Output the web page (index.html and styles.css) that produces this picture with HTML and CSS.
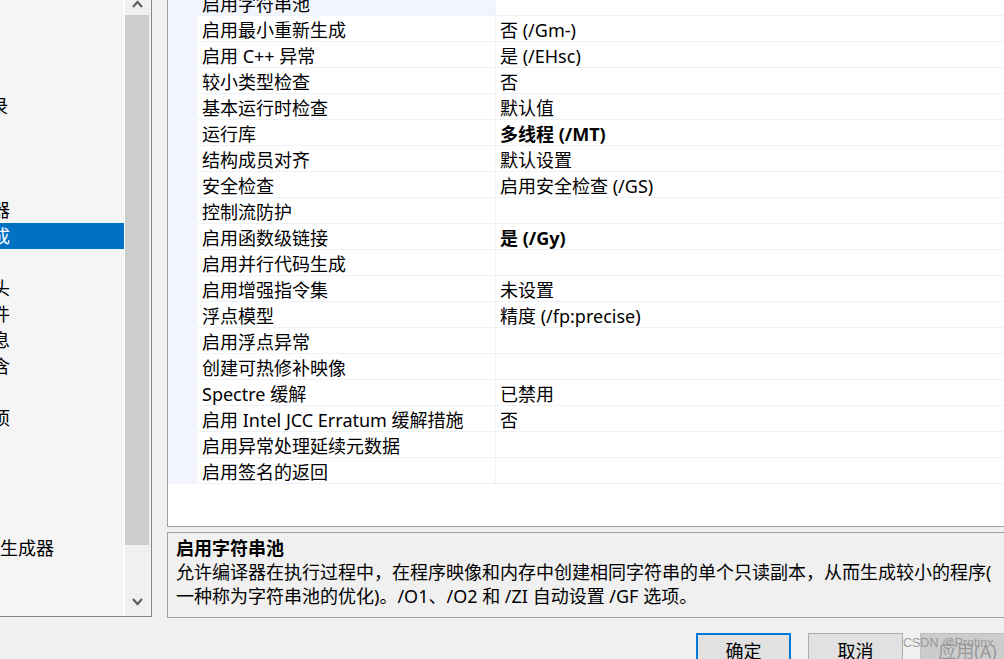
FILE: index.html
```html
<!DOCTYPE html>
<html lang="zh-CN">
<head>
<meta charset="utf-8">
<title>属性页</title>
<link rel="stylesheet" href="styles.css">
</head>
<body>
<div class="dialog">
  <div class="main">
    <div class="tree-panel">
      <div class="tree">
        <div class="tree-item lvl0">配置属性</div>
        <div class="tree-item lvl1">常规</div>
        <div class="tree-item lvl1">高级</div>
        <div class="tree-item lvl1">调试</div>
        <div class="tree-item lvl1 vc">VC++ 目录</div>
        <div class="tree-item lvl1">C/C++</div>
        <div class="tree-item lvl2">常规</div>
        <div class="tree-item lvl2">优化</div>
        <div class="tree-item lvl2">预处理器</div>
        <div class="tree-item lvl2 selected">代码生成</div>
        <div class="tree-item lvl2">语言</div>
        <div class="tree-item lvl2">预编译头</div>
        <div class="tree-item lvl2">输出文件</div>
        <div class="tree-item lvl2">浏览信息</div>
        <div class="tree-item lvl2">外部包含</div>
        <div class="tree-item lvl2">高级</div>
        <div class="tree-item lvl2">所有选项</div>
        <div class="tree-item lvl2">命令行</div>
        <div class="tree-item lvl1">链接器</div>
        <div class="tree-item lvl1">清单工具</div>
        <div class="tree-item lvl1">资源</div>
        <div class="tree-item lvl1">XML 文档生成器</div>
        <div class="tree-item lvl1">浏览信息</div>
        <div class="tree-item lvl1">生成事件</div>
        <div class="tree-item lvl1">自定义生成步骤</div>
      </div>
      <div class="vscroll">
        <div class="sb-btn sb-up">
          <svg width="11" height="8" viewBox="0 0 11 8"><polyline points="1,7 5.5,2 10,7" fill="none" stroke="#606060" stroke-width="2.2"/></svg>
        </div>
        <div class="thumb"></div>
        <div class="track"></div>
        <div class="sb-btn sb-down">
          <svg width="11" height="8" viewBox="0 0 11 8"><polyline points="1,1 5.5,6 10,1" fill="none" stroke="#606060" stroke-width="2.2"/></svg>
        </div>
      </div>
    </div>

    <div class="right">
      <div class="grid">
        <div class="row selected"><div class="margin"></div><div class="name">启用字符串池</div><div class="value"></div></div>
        <div class="row"><div class="margin"></div><div class="name">启用最小重新生成</div><div class="value">否 (/Gm-)</div></div>
        <div class="row"><div class="margin"></div><div class="name">启用 C++ 异常</div><div class="value">是 (/EHsc)</div></div>
        <div class="row"><div class="margin"></div><div class="name">较小类型检查</div><div class="value">否</div></div>
        <div class="row"><div class="margin"></div><div class="name">基本运行时检查</div><div class="value">默认值</div></div>
        <div class="row"><div class="margin"></div><div class="name">运行库</div><div class="value bold">多线程 (/MT)</div></div>
        <div class="row"><div class="margin"></div><div class="name">结构成员对齐</div><div class="value">默认设置</div></div>
        <div class="row"><div class="margin"></div><div class="name">安全检查</div><div class="value">启用安全检查 (/GS)</div></div>
        <div class="row"><div class="margin"></div><div class="name">控制流防护</div><div class="value"></div></div>
        <div class="row"><div class="margin"></div><div class="name">启用函数级链接</div><div class="value bold">是 (/Gy)</div></div>
        <div class="row"><div class="margin"></div><div class="name">启用并行代码生成</div><div class="value"></div></div>
        <div class="row"><div class="margin"></div><div class="name">启用增强指令集</div><div class="value">未设置</div></div>
        <div class="row"><div class="margin"></div><div class="name">浮点模型</div><div class="value">精度 (/fp:precise)</div></div>
        <div class="row"><div class="margin"></div><div class="name">启用浮点异常</div><div class="value"></div></div>
        <div class="row"><div class="margin"></div><div class="name">创建可热修补映像</div><div class="value"></div></div>
        <div class="row"><div class="margin"></div><div class="name">Spectre 缓解</div><div class="value">已禁用</div></div>
        <div class="row"><div class="margin"></div><div class="name">启用 Intel JCC Erratum 缓解措施</div><div class="value">否</div></div>
        <div class="row"><div class="margin"></div><div class="name">启用异常处理延续元数据</div><div class="value"></div></div>
        <div class="row"><div class="margin"></div><div class="name">启用签名的返回</div><div class="value"></div></div>
      </div>
      <div class="desc">
        <div class="desc-title">启用字符串池</div>
        <div class="desc-line">允许编译器在执行过程中，在程序映像和内存中创建相同字符串的单个只读副本，从而生成较小的程序(</div>
        <div class="desc-line">一种称为字符串池的优化)。/O1、/O2 和 /ZI 自动设置 /GF 选项。</div>
      </div>
    </div>
  </div>

  <div class="footer">
    <button class="btn primary">确定</button>
    <button class="btn">取消</button>
    <button class="btn disabled">应用(A)</button>
    <span class="watermark">CSDN @Protinx</span>
  </div>
</div>
</body>
</html>
```

FILE: styles.css
```css
html, body {
  margin: 0;
  padding: 0;
}

body {
  background: #f0f0f0;
  font-family: "Noto Sans", "Noto Sans CJK SC", sans-serif;
  font-size: 18px;
  color: #000;
  overflow: hidden;
}

.dialog {
  width: 1004px;
  height: 659px;
  overflow: hidden;
  position: relative;
}

.main {
  display: flex;
  align-items: flex-start;
  margin-top: -11px;
}

/* ---------- left tree ---------- */
.tree-panel {
  flex: none;
  display: flex;
  width: 151px;
  height: 627px;
  border-right: 1px solid #828790;
  border-bottom: 1px solid #828790;
}

.tree {
  width: 124px;
  border-right: 1px solid #ffffff;
  background: #f5f5f5;
  overflow: hidden;
}

.tree-item {
  height: 26px;
  line-height: 26px;
  white-space: nowrap;
}

.lvl0 { text-indent: -92px; }
.lvl1 { text-indent: -77px; }
.lvl1.vc { text-indent: -75px; }
.lvl2 { text-indent: -62px; }

.tree-item.selected {
  background: #0072c6;
  color: #ffffff;
}

.vscroll {
  width: 26px;
  display: flex;
  flex-direction: column;
  background: #f0f0f0;
}

.sb-btn {
  flex: none;
  height: 26px;
  box-sizing: border-box;
  display: flex;
  justify-content: center;
  padding-right: 2px;
}

.sb-btn svg { display: block; }

.sb-up { padding-top: 11px; }
.sb-down { padding-top: 8px; }

.thumb {
  flex: none;
  height: 530px;
  margin-right: 2px;
  background: #cdcdcd;
}

.track { flex: 1; }

/* ---------- right side ---------- */
.right {
  flex: none;
  width: 880px;
  margin-left: 15px;
}

.grid {
  height: 536px;
  border: 1px solid #a0a0a0;
  border-right: none;
  background: #ffffff;
}

.row {
  display: flex;
  height: 26px;
}

.row .margin {
  flex: none;
  width: 29px;
  background: #f2f5fb;
}

.row .name,
.row .value {
  box-sizing: content-box;
  height: 23px;
  padding-top: 2px;
  line-height: 25px;
  border-bottom: 1px solid #edf1f8;
  white-space: nowrap;
  overflow: hidden;
}

.row .name {
  flex: none;
  width: 293px;
  padding-left: 5px;
  border-right: 1px solid #edf1f8;
}

.row .value {
  flex: 1;
  padding-left: 4px;
}

.row.selected .name {
  background: #f2f5fb;
}

.bold { font-weight: bold; }

.desc {
  margin-top: 5px;
  box-sizing: content-box;
  height: 81px;
  padding: 3px 0 0 8px;
  border: 1px solid #a0a0a0;
  border-right: none;
  background: #f0f0f0;
}

.desc-title {
  font-weight: bold;
  line-height: 24px;
}

.desc-line {
  line-height: 24px;
  white-space: nowrap;
}

/* ---------- footer ---------- */
.footer {
  display: flex;
  gap: 17px;
  padding: 15px 0 0 696px;
}

.btn {
  flex: none;
  width: 95px;
  height: 34px;
  padding: 0;
  font: inherit;
  color: #000;
  background: #e1e1e1;
  border: 1px solid #adadad;
}

.btn.primary {
  border: 2px solid #0078d7;
}

.btn.disabled {
  background: #cccccc;
  border-color: #bfbfbf;
  color: #9a9a9a;
}

.watermark {
  position: absolute;
  left: 903px;
  top: 636px;
  font-family: "Liberation Sans", sans-serif;
  font-size: 12.5px;
  line-height: 14px;
  color: rgba(140, 140, 140, 0.85);
  white-space: nowrap;
}
```
